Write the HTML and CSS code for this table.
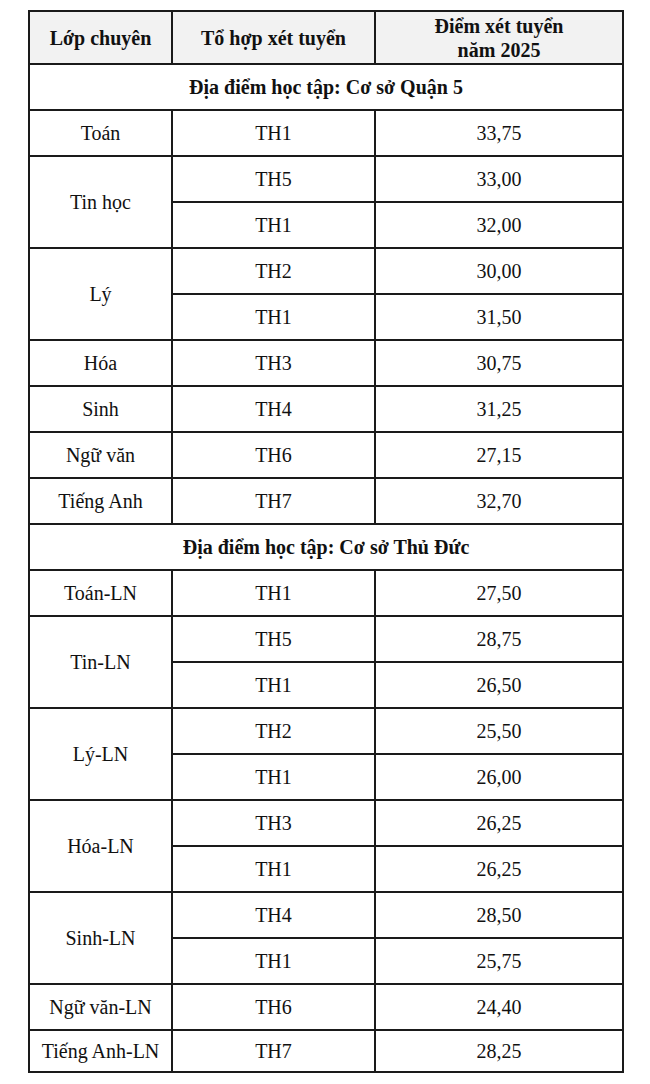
FILE: index.html
```html
<!DOCTYPE html>
<html lang="vi">
<head>
<meta charset="utf-8">
<title>Điểm xét tuyển năm 2025</title>
<link rel="stylesheet" href="styles.css">
</head>
<body>
<table class="scores">
  <colgroup>
    <col class="col-class">
    <col class="col-combo">
    <col class="col-score">
  </colgroup>
  <thead>
    <tr class="head-row">
      <th>Lớp chuyên</th>
      <th>Tổ hợp xét tuyển</th>
      <th>Điểm xét tuyển<br>năm 2025</th>
    </tr>
  </thead>
  <tbody>
    <tr class="section-row"><td colspan="3">Địa điểm học tập: Cơ sở Quận 5</td></tr>
    <tr><td>Toán</td><td>TH1</td><td>33,75</td></tr>
    <tr><td rowspan="2">Tin học</td><td>TH5</td><td>33,00</td></tr>
    <tr><td>TH1</td><td>32,00</td></tr>
    <tr><td rowspan="2">Lý</td><td>TH2</td><td>30,00</td></tr>
    <tr><td>TH1</td><td>31,50</td></tr>
    <tr><td>Hóa</td><td>TH3</td><td>30,75</td></tr>
    <tr><td>Sinh</td><td>TH4</td><td>31,25</td></tr>
    <tr><td>Ngữ văn</td><td>TH6</td><td>27,15</td></tr>
    <tr><td>Tiếng Anh</td><td>TH7</td><td>32,70</td></tr>
    <tr class="section-row"><td colspan="3">Địa điểm học tập: Cơ sở Thủ Đức</td></tr>
    <tr><td>Toán-LN</td><td>TH1</td><td>27,50</td></tr>
    <tr><td rowspan="2">Tin-LN</td><td>TH5</td><td>28,75</td></tr>
    <tr><td>TH1</td><td>26,50</td></tr>
    <tr><td rowspan="2">Lý-LN</td><td>TH2</td><td>25,50</td></tr>
    <tr><td>TH1</td><td>26,00</td></tr>
    <tr><td rowspan="2">Hóa-LN</td><td>TH3</td><td>26,25</td></tr>
    <tr><td>TH1</td><td>26,25</td></tr>
    <tr><td rowspan="2">Sinh-LN</td><td>TH4</td><td>28,50</td></tr>
    <tr><td>TH1</td><td>25,75</td></tr>
    <tr><td>Ngữ văn-LN</td><td>TH6</td><td>24,40</td></tr>
    <tr class="row-short"><td>Tiếng Anh-LN</td><td>TH7</td><td>28,25</td></tr>
  </tbody>
</table>
</body>
</html>
```

FILE: styles.css
```css
html, body {
  margin: 0;
  background: #ffffff;
}

body {
  padding: 10px 0 0 28px;
  font-family: "Liberation Serif", "Times New Roman", serif;
  color: #111111;
}

.scores {
  border-collapse: collapse;
  table-layout: fixed;
  width: 594px;
  font-size: 20px;
}

.col-class { width: 143px; }
.col-combo { width: 203px; }
.col-score { width: 248px; }

.scores th,
.scores td {
  border: 2px solid #1a1a1a;
  text-align: center;
  vertical-align: middle;
  line-height: 23px;
  padding: 11px 2px 10px;
  font-weight: normal;
}

.head-row th {
  background: #f2f2f2;
  font-weight: bold;
  line-height: 24px;
  padding: 1.5px 2px;
}

.section-row td {
  font-weight: bold;
}

.row-short td {
  padding: 9px 2px 8px;
}
```
